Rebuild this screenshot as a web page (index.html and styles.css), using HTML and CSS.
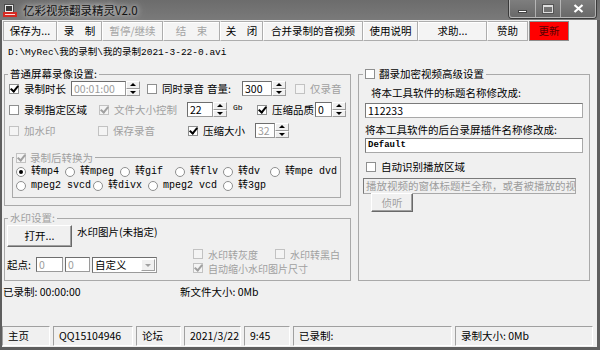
FILE: index.html
```html
<!DOCTYPE html>
<html lang="zh-CN">
<head>
    <meta charset="UTF-8">
    <meta name="viewport" content="width=device-width, initial-scale=1.0">
    <title>亿彩视频翻录精灵V2.0</title>
    <link rel="stylesheet" href="styles.css">
</head>
<body>

<div class="window">
    <!-- caption -->
    <div class="titlebar">
        <svg class="app-icon" width="14" height="15" viewBox="0 0 14 15">
            <rect x="1.5" y="1.5" width="9" height="8" fill="#ececec" stroke="#4a4a4a"/>
            <rect x="3" y="3" width="6" height="5" fill="#3b3b3b"/>
            <rect x="0" y="9" width="14" height="5" fill="#d42a22"/>
            <rect x="2" y="11" width="10" height="1" fill="#ffd9d6"/>
        </svg>
        <span class="title">亿彩视频翻录精灵V2.0</span>
        <div class="caption">
            <span class="cap min"><i class="glyph-min"></i></span>
            <span class="cap max"><i class="glyph-max"></i></span>
            <span class="cap close">
                <svg width="11" height="9" viewBox="0 0 11 9"><path d="M1.5 1 L9.5 8 M9.5 1 L1.5 8" stroke="#fff" stroke-width="2.2"/></svg>
            </span>
        </div>
    </div>

    <div class="client">
        <div class="toolbar">
            <button class="tb tb-save">保存为...</button>
            <button class="tb tb-rec">录　制</button>
            <button class="tb tb-pause" disabled>暂停/继续</button>
            <button class="tb tb-stop" disabled>结　束</button>
            <button class="tb tb-close">关　闭</button>
            <button class="tb tb-merge">合并录制的音视频</button>
            <button class="tb tb-manual">使用说明</button>
            <button class="tb tb-ask">求助...</button>
            <button class="tb tb-donate">赞助</button>
            <button class="tb tb-update">更新</button>
        </div>

        <div class="path">D:\MyRec\我的录制\我的录制2021-3-22-0.avi</div>

        <div class="main">
            <div class="left-col">
                <!-- 普通屏幕录像设置 -->
                <div class="group normal">
                    <div class="group-title">普通屏幕录像设置:</div>
                    <div class="row">
                        <label class="check w62"><span class="cb on"></span>录制时长</label>
                        <div class="spin w76">
                            <span class="field off in55">00:01:00</span>
                            <span class="arrows"><i class="up"></i><i class="dn"></i></span>
                        </div>
                        <label class="check w60"><span class="cb"></span>同时录音</label>
                        <span class="w35">音量:</span>
                        <div class="spin w53">
                            <span class="field in30">300</span>
                            <span class="arrows"><i class="up"></i><i class="dn"></i></span>
                        </div>
                        <label class="check disabled"><span class="cb"></span>仅录音</label>
                    </div>
                    <div class="row">
                        <label class="check w90"><span class="cb"></span>录制指定区域</label>
                        <label class="check disabled w88"><span class="cb on"></span>文件大小控制</label>
                        <div class="spin w70">
                            <span class="field in26">22</span>
                            <span class="arrows"><i class="up"></i><i class="dn"></i></span>
                            <span class="unit">Gb</span>
                        </div>
                        <label class="check w58"><span class="cb on"></span>压缩品质</label>
                        <div class="spin">
                            <span class="field in17">0</span>
                            <span class="arrows"><i class="up"></i><i class="dn"></i></span>
                        </div>
                    </div>
                    <div class="row">
                        <label class="check disabled w89"><span class="cb"></span>加水印</label>
                        <label class="check disabled w90"><span class="cb"></span>保存录音</label>
                        <label class="check w67"><span class="cb on"></span>压缩大小</label>
                        <div class="spin">
                            <span class="field off in20">32</span>
                            <span class="arrows"><i class="up"></i><i class="dn"></i></span>
                        </div>
                    </div>

                    <div class="group convert">
                        <div class="group-title disabled"><span class="cb on"></span>录制后转换为</div>
                        <div class="radio-row">
                            <label class="radio w49"><span class="rb on"></span>转mp4</label>
                            <label class="radio w55"><span class="rb"></span>转mpeg</label>
                            <label class="radio w55"><span class="rb"></span>转gif</label>
                            <label class="radio w48"><span class="rb"></span>转flv</label>
                            <label class="radio w47"><span class="rb"></span>转dv</label>
                            <label class="radio"><span class="rb"></span>转mpe dvd</label>
                        </div>
                        <div class="radio-row">
                            <label class="radio w77"><span class="rb"></span>mpeg2 svcd</label>
                            <label class="radio w55"><span class="rb"></span>转divx</label>
                            <label class="radio w75"><span class="rb"></span>mpeg2 vcd</label>
                            <label class="radio"><span class="rb"></span>转3gp</label>
                        </div>
                    </div>
                </div>

                <!-- 水印设置 -->
                <div class="group watermark">
                    <div class="group-title disabled">水印设置:</div>
                    <div class="wm-top">
                        <button class="btn open">打开...</button>
                        <span class="wm-file">水印图片(未指定)</span>
                    </div>
                    <div class="wm-bottom">
                        <span class="origin">起点:</span>
                        <span class="field off x-in">0</span>
                        <span class="field off y-in">0</span>
                        <span class="combo"><span class="combo-text">自定义</span><span class="drop"></span></span>
                        <div class="wm-options">
                            <div class="wm-line">
                                <label class="check disabled w82"><span class="cb"></span>水印转灰度</label>
                                <label class="check disabled"><span class="cb"></span>水印转黑白</label>
                            </div>
                            <div class="wm-line">
                                <label class="check disabled"><span class="cb on"></span>自动缩小水印图片尺寸</label>
                            </div>
                        </div>
                    </div>
                </div>
            </div>

            <!-- 翻录加密视频高级设置 -->
            <div class="group adv">
                <div class="group-title"><span class="cb"></span>翻录加密视频高级设置</div>
                <div class="adv-label first">将本工具软件的标题名称修改成:</div>
                <div class="text-input">112233</div>
                <div class="adv-label">将本工具软件的后台录屏插件名称修改成:</div>
                <div class="text-input mono">Default</div>
                <label class="check auto-area"><span class="cb"></span>自动识别播放区域</label>
                <div class="text-input off">播放视频的窗体标题栏全称，或者被播放的视</div>
                <button class="btn listen" disabled>侦听</button>
            </div>
        </div>

        <div class="status">
            <span class="recorded">已录制: 00:00:00</span>
            <span>新文件大小: 0Mb</span>
        </div>

        <div class="statusbar">
            <span class="panel p-home">主页</span>
            <span class="panel p-qq">QQ15104946</span>
            <span class="panel p-forum">论坛</span>
            <span class="panel p-date">2021/3/22</span>
            <span class="panel p-time">9:45</span>
            <span class="panel p-rec">已录制:</span>
            <span class="panel p-size">录制大小: 0Mb</span>
        </div>
    </div>
</div>

</body>
</html>
```

FILE: styles.css
```css
* {
    box-sizing: border-box;
}

body {
    margin: 0;
    font-family: "Noto Sans CJK SC", "Noto Sans", sans-serif;
    font-size: 10.5px;
    line-height: 14px;
    color: #000;
    background: #fff;
}

.window {
    width: 600px;
    height: 350px;
    display: flex;
    flex-direction: column;
    background: #5e5e5e;
}

/* Title bar */
.titlebar {
    height: 20px;
    flex-shrink: 0;
    display: flex;
    align-items: center;
    background: linear-gradient(#6c6c6c, #7a7a7a);
}

.app-icon {
    margin: 0 6px 0 3px;
}

.title {
    color: #111;
    font-size: 11.5px;
    text-shadow: 0 0 5px #d8d8d8, 0 0 8px #c8c8c8;
}

.caption {
    margin-left: auto;
    margin-right: 3px;
    align-self: flex-start;
    display: flex;
    border: 1px solid #3a3a3a;
    border-top: 0;
    border-radius: 0 0 4px 4px;
}

.cap {
    height: 18px;
    display: flex;
    align-items: center;
    justify-content: center;
    border: 1px solid rgba(255, 255, 255, 0.45);
    border-top: 0;
    background: linear-gradient(#7e7e7e, #696969);
}

.cap.min {
    width: 27px;
    border-bottom-left-radius: 3px;
}

.cap.max {
    width: 25px;
    border-left: 0;
}

.cap.close {
    width: 35px;
    border-left: 0;
    border-bottom-right-radius: 3px;
}

.glyph-min {
    width: 9px;
    height: 3px;
    margin-top: 6px;
    background: #fff;
    border: 1px solid #444;
}

.glyph-max {
    width: 10px;
    height: 8px;
    border: 1px solid #ddd;
    border-top-width: 2px;
    box-shadow: 0 0 0 1px #555;
}

/* Client area */
.client {
    flex: 1;
    margin: 0 3px 3px 2px;
    padding-bottom: 1px;
    background: #f0f0f0;
    display: flex;
    flex-direction: column;
}

.toolbar {
    height: 22px;
    flex-shrink: 0;
    display: flex;
    padding: 1px 0 1px 1px;
}

.tb {
    height: 20px;
    padding: 0;
    font: inherit;
    color: #000;
    background: #f4f4f4;
    border: 1px solid #adadad;
    border-left-color: #fff;
    box-shadow: inset 0 1px 0 #fff;
}

.tb:disabled {
    color: #a3a3a3;
}

.tb-save { width: 54px; border-left-color: #adadad; }
.tb-rec { width: 45px; }
.tb-pause { width: 61px; }
.tb-stop { width: 57px; }
.tb-close { width: 43px; }
.tb-merge { width: 100px; }
.tb-manual { width: 55px; }
.tb-ask { width: 69px; }
.tb-donate { width: 41px; }

.tb-update {
    width: 40px;
    margin-left: 1px;
    background: #ff0000;
    color: #5a0000;
    border-color: #8c8c8c;
    box-shadow: none;
}

.path {
    height: 20px;
    padding-left: 6px;
    font-family: "Liberation Mono", "Noto Sans CJK SC", monospace;
    font-size: 9.5px;
    line-height: 21px;
}

/* Layout */
.main {
    display: flex;
    margin-top: 12px;
}

.left-col {
    width: 347px;
    margin-left: 2px;
}

.group {
    border: 1px solid #a9a9a9;
}

.group-title {
    width: fit-content;
    height: 14px;
    margin: -8px 0 0 3px;
    padding: 0 2px;
    background: #f0f0f0;
    display: flex;
    align-items: center;
}

.group-title .cb {
    margin-right: 4px;
}

.disabled,
.group-title.disabled {
    color: #a0a0a0;
}

.normal {
    height: 132px;
}

.normal .group-title {
    margin-bottom: -3px;
}

.row {
    height: 21px;
    display: flex;
    align-items: center;
    padding-left: 4px;
}

/* Checkboxes and radios */
.check,
.radio {
    display: flex;
    align-items: center;
    white-space: nowrap;
}

.cb {
    position: relative;
    width: 10px;
    height: 10px;
    flex-shrink: 0;
    margin-right: 5px;
    background: #fff;
    border: 1px solid #8e8f8f;
}

.cb.on::after {
    content: "";
    position: absolute;
    left: 2px;
    top: -1px;
    width: 3px;
    height: 6px;
    border: solid #000;
    border-width: 0 2px 2px 0;
    transform: rotate(40deg);
}

.disabled .cb {
    background: #f4f4f4;
    border-color: #c2c2c2;
}

.disabled .cb.on::after {
    border-color: #a0a0a0;
}

.rb {
    position: relative;
    width: 10px;
    height: 10px;
    flex-shrink: 0;
    margin-right: 5px;
    border-radius: 50%;
    background: #fff;
    border: 1px solid #8e8f8f;
}

.rb.on::after {
    content: "";
    position: absolute;
    left: 2px;
    top: 2px;
    width: 4px;
    height: 4px;
    border-radius: 50%;
    background: #000;
}

/* Spin edits */
.spin {
    display: flex;
    align-items: center;
}

.field {
    height: 15px;
    padding-left: 2px;
    font-size: 10.5px;
    line-height: 13px;
    background: #fff;
    border: 1px solid #9a9a9a;
    border-top-color: #6e6e6e;
    border-left-color: #6e6e6e;
}

.field.off {
    color: #9c9c9c;
}

.arrows {
    width: 14px;
    height: 15px;
    display: flex;
    flex-direction: column;
}

.arrows i {
    flex: 1;
    display: flex;
    align-items: center;
    justify-content: center;
    background: #f0f0f0;
    border: 1px solid #9a9a9a;
    border-top-color: #fff;
    border-left-color: #fff;
}

.arrows .up::after {
    content: "";
    border: 3px solid transparent;
    border-top: 0;
    border-bottom: 3px solid #000;
}

.arrows .dn::after {
    content: "";
    border: 3px solid transparent;
    border-bottom: 0;
    border-top: 3px solid #000;
}

.unit {
    align-self: flex-start;
    margin: -1px 0 0 6px;
    font-family: "Liberation Mono", monospace;
    font-size: 8px;
}

.in55 { width: 55px; }
.in30 { width: 30px; }
.in26 { width: 26px; }
.in20 { width: 20px; }
.in17 { width: 17px; }

.w35 { width: 35px; }
.w47 { width: 47px; }
.w48 { width: 48px; }
.w49 { width: 49px; }
.w53 { width: 53px; }
.w55 { width: 55px; }
.w58 { width: 58px; }
.w60 { width: 60px; }
.w62 { width: 62px; }
.w67 { width: 67px; }
.w70 { width: 70px; }
.w75 { width: 75px; }
.w76 { width: 76px; }
.w77 { width: 77px; }
.w82 { width: 82px; }
.w88 { width: 88px; }
.w89 { width: 89px; }
.w90 { width: 90px; }

/* 录制后转换为 */
.convert {
    width: 329px;
    height: 41px;
    margin: 16px 0 0 7px;
}

.convert .group-title {
    height: 13px;
    margin: -7px 0 1px 1px;
}

.radio-row {
    height: 14px;
    display: flex;
    align-items: center;
    padding-left: 3px;
    font-family: "Liberation Mono", "Noto Sans CJK SC", monospace;
    font-size: 10px;
    line-height: 12px;
}

/* 水印设置 */
.watermark {
    height: 63px;
    margin-top: 12px;
}

.wm-top {
    display: flex;
    padding-left: 2px;
}

.btn {
    font: inherit;
    color: #000;
    padding: 0;
    background: #f0f0f0;
    border: 1px solid;
    border-color: #fff #696969 #696969 #fff;
    box-shadow: inset -1px -1px 0 #a0a0a0;
}

.btn:disabled {
    color: #a0a0a0;
}

.open {
    width: 65px;
    height: 22px;
}

.wm-file {
    margin-left: 5px;
}

.wm-bottom {
    display: flex;
    padding-left: 2px;
}

.origin {
    width: 29px;
    margin-top: 11px;
}

.x-in,
.y-in,
.combo {
    margin-top: 10px;
}

.x-in {
    width: 27px;
}

.y-in {
    width: 25px;
    margin-left: 2px;
}

.combo {
    width: 65px;
    height: 16px;
    margin-left: 2px;
    display: flex;
    background: #fff;
    border: 1px solid #9a9a9a;
    border-top-color: #6e6e6e;
    border-left-color: #6e6e6e;
}

.combo-text {
    flex: 1;
    padding-left: 2px;
    line-height: 13px;
}

.drop {
    width: 14px;
    margin: 1px;
    display: flex;
    align-items: center;
    justify-content: center;
    background: #f0f0f0;
    border: 1px solid;
    border-color: #fff #a0a0a0 #a0a0a0 #fff;
}

.drop::after {
    content: "";
    border: 3px solid transparent;
    border-bottom: 0;
    border-top: 3px solid #a0a0a0;
}

.wm-options {
    margin-left: 36px;
}

.wm-line {
    height: 14px;
    display: flex;
    align-items: center;
    font-size: 10px;
    line-height: 13px;
}

/* 高级设置 */
.adv {
    width: 232px;
    height: 207px;
    margin-left: 7px;
}

.adv .group-title {
    margin-left: 4px;
}

.adv-label {
    margin: 5px 0 0 6px;
}

.adv-label.first {
    margin-left: 12px;
}

.text-input {
    width: 218px;
    height: 15px;
    margin: 3px 0 0 6px;
    padding-left: 2px;
    font-size: 10.5px;
    line-height: 13px;
    background: #fff;
    border: 1px solid #a8a8a8;
    border-top-color: #7a7a7a;
    border-left-color: #7a7a7a;
}

.text-input.mono {
    margin-top: 1px;
    font-family: "Liberation Mono", monospace;
    font-size: 9px;
    font-weight: bold;
}

.auto-area {
    height: 14px;
    margin: 7px 0 0 7px;
}

.text-input.off {
    width: 213px;
    height: 16px;
    margin: 4px 0 0 4px;
    color: #9c9c9c;
    background: #f0f0f0;
    white-space: nowrap;
    overflow: hidden;
}

.listen {
    display: block;
    width: 42px;
    height: 19px;
    margin: -1px 0 0 12px;
}

/* Status */
.status {
    display: flex;
    height: 14px;
    margin-top: 4px;
    padding-left: 1px;
}

.recorded {
    width: 177px;
}

.statusbar {
    height: 20px;
    margin-top: auto;
    display: flex;
    gap: 3px;
}

.panel {
    padding-left: 5px;
    line-height: 18px;
    border: 1px solid;
    border-color: #a0a0a0 #fff #fff #a0a0a0;
}

.p-home { width: 48px; }
.p-qq { width: 80px; }
.p-forum { width: 45px; }
.p-date { width: 57px; }
.p-time { width: 46px; }
.p-rec { width: 159px; }
.p-size { width: 138px; }
```
